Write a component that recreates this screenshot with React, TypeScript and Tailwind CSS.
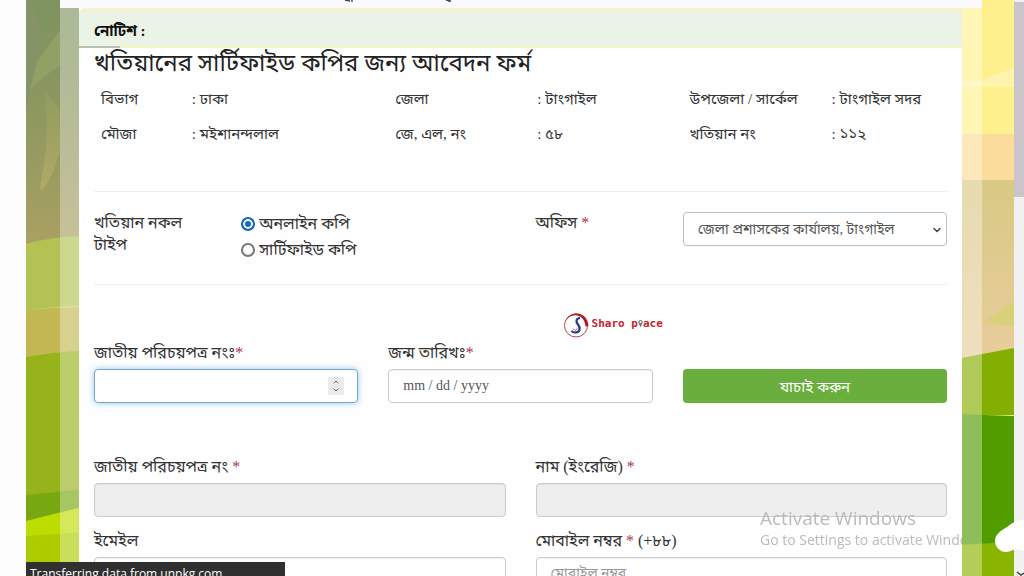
import React from "react";
import { ChevronDown, ChevronUp } from "lucide-react";

const details = [
  [
    { label: "বিভাগ", value: "ঢাকা" },
    { label: "জেলা", value: "টাংগাইল" },
    { label: "উপজেলা / সার্কেল", value: "টাংগাইল সদর" },
  ],
  [
    { label: "মৌজা", value: "মইশানন্দলাল" },
    { label: "জে, এল, নং", value: "৫৮" },
    { label: "খতিয়ান নং", value: "১১২" },
  ],
];

const baseField =
  "block h-[34px] w-full rounded border px-[14px] text-[14px] text-[#555] outline-none";
const fieldClass = `${baseField} border-[#ccc] bg-white shadow-[inset_0_1px_1px_rgba(0,0,0,0.06)]`;
const disabledClass = `${baseField} border-[#ccc] bg-[#eee] shadow-[inset_0_1px_1px_rgba(0,0,0,0.06)]`;
const focusedClass = `${baseField} border-[#79a6c8] bg-white shadow-[0_0_6px_rgba(102,175,233,0.7)]`;
const selectClass = `${baseField} appearance-none border-[#afc3d0] bg-white`;

export default function App() {
  return (
    <div className="flex h-screen overflow-hidden bg-[#fdfdfd] pl-[26px] font-['Liberation_Serif','Noto_Sans_Bengali','Noto_Sans',serif] text-[#333]">
      <div className="relative min-w-0 flex-1 overflow-hidden">
        <Landscape />

        <div className="relative mr-8 ml-[34px] min-h-full bg-white/35">
          <TopStrip />
          <main className="mr-5 ml-[19px] bg-[#fefefe]">
            <NoticeBar />
            <div className="px-[15px]">
              <h1 className="pt-[2px] text-[24px] leading-[26px] text-[#222]">
                খতিয়ানের সার্টিফাইড কপির জন্য আবেদন ফর্ম
              </h1>
              <DetailsTable />
              <hr className="mt-[39px] border-[#efefef]" />
              <CopyTypeRow />
              <hr className="border-[#efefef]" />
              <Brand />
              <VerifyRow />
              <ApplicantFields />
            </div>
          </main>
          <Watermark />
        </div>

        <div className="absolute bottom-0 left-0 h-[14px] w-[259px] overflow-hidden bg-[#303030] pl-1 font-['Open_Sans',sans-serif] text-[12px] leading-6 text-white">
          Transferring data from unpkg.com...
        </div>
      </div>

      <Scrollbar />
    </div>
  );
}

const TopStrip = () => (
  <div className="h-2 bg-[#fbfbfd]">
    {/* tails of the menu text that is scrolled out of view */}
    <svg className="ml-[284px] block" width="112" height="3" viewBox="0 0 112 3">
      <path d="M1 0l5 1M8 0v2M102 0l5 1M105 0v2" stroke="#444" strokeWidth="1.4" fill="none" />
    </svg>
  </div>
);

const NoticeBar = () => (
  <div className="rounded-tl-md border-t-[3px] border-[#f5f3c8] bg-[#eaf3e6]">
    <p className="px-[15px] pt-[10px] pb-[5px] text-[15px] leading-5 font-bold text-[#111]">
      নোটিশ :
    </p>
    <div className="flex h-[2px]">
      <span className="w-[41px] bg-[#b9c0b4]" />
      <span className="flex-1 bg-[#f4f7bf]" />
    </div>
  </div>
);

const DetailsTable = () => (
  <table className="mt-[6px] w-full table-fixed text-left text-[15px]">
    <colgroup>
      <col className="w-[11%]" />
      <col className="w-[23.5%]" />
      <col className="w-[17%]" />
      <col className="w-[17.5%]" />
      <col className="w-[17%]" />
      <col className="w-[14%]" />
    </colgroup>
    <tbody>
      {details.map((row, i) => (
        <tr key={i} className="h-[35px]">
          {row.map(({ label, value }) => (
            <React.Fragment key={label}>
              <th scope="row" className="pl-[7px] font-normal whitespace-nowrap">
                {label}
              </th>
              <td className="pl-1 whitespace-nowrap">: {value}</td>
            </React.Fragment>
          ))}
        </tr>
      ))}
    </tbody>
  </table>
);

const CopyTypeRow = () => (
  <div className="-mx-[15px] grid grid-cols-12 pt-5 pb-5 text-[16px]">
    <p id="copy-type" className="col-span-2 px-[15px] leading-[22px]">
      খতিয়ান নকল টাইপ
    </p>
    <div role="radiogroup" aria-labelledby="copy-type" className="col-span-4 px-[15px]">
      <label className="flex h-6 items-center gap-1 whitespace-nowrap">
        <Radio defaultChecked />
        অনলাইন কপি
      </label>
      <label className="flex h-7 items-center gap-1 whitespace-nowrap">
        <Radio />
        সার্টিফাইড কপি
      </label>
    </div>
    <label htmlFor="office" className="col-span-2 px-[15px] leading-[22px]">
      অফিস <Star />
    </label>
    <div className="relative col-span-4 px-[15px]">
      <select id="office" className={selectClass}>
        <option>জেলা প্রশাসকের কার্যালয়, টাংগাইল</option>
      </select>
      <ChevronDown
        size={12}
        strokeWidth={3}
        className="pointer-events-none absolute top-3 right-[19px] text-[#444]"
      />
    </div>
  </div>
);

const Radio = ({ defaultChecked }: { defaultChecked?: boolean }) => (
  <input
    type="radio"
    name="copyType"
    defaultChecked={defaultChecked}
    className="size-[14px] shrink-0 appearance-none rounded-full border-2 border-[#777] bg-white checked:border-[#1668b8] checked:bg-[#1668b8] checked:shadow-[inset_0_0_0_2px_#fff]"
  />
);

const Star = () => <span className="text-[#b3324a]">*</span>;

const Brand = () => (
  <div className="-mr-[15px] flex h-[58px] items-start pt-[27px] pl-[54%]">
    <div className="ml-2 flex items-center gap-[2px]">
      <svg width="27" height="27" viewBox="0 0 27 27" fill="none">
        <circle cx="13" cy="13.500" r="11.500" stroke="#b8494c" strokeWidth="1" />
        <path
          d="M2.500 9C5 3 10 1 15 1.500C21 2.500 25 7 25.500 14L22.500 14.500C22 8 19 4.500 14 3.500C9 2.500 5 5 2.500 9Z"
          fill="#ae1b22"
        />
        <path
          d="M17 6C13 6.500 12.500 9.500 15 12.500C18 16 17 20.500 12 20.500C10.500 20.500 9.500 20 8.500 19"
          stroke="#27348b"
          strokeWidth="2.200"
        />
        <path d="M10 16.500L12 18.500L14.500 16.500" stroke="#c5565b" strokeWidth="1" />
      </svg>
      <span className="pb-1 font-['DejaVu_Sans_Mono',monospace] text-[11px] leading-4 font-bold text-[#c5242b]">
        Sharo p
        <svg className="inline-block align-[-1px]" width="5" height="9" viewBox="0 0 5 9">
          <path d="M2.500 8.500L.5 4A2.200 2.200 0 1 1 4.500 4Z" fill="#777" />
          <circle cx="2.500" cy="3" r="1" fill="#fff" />
        </svg>
        ace
      </span>
    </div>
  </div>
);

const VerifyRow = () => (
  <form
    className="grid grid-cols-3 items-end gap-[30px]"
    onSubmit={(e) => e.preventDefault()}
  >
    <div>
      <label htmlFor="nid" className="block h-[26px] text-[16px] leading-[20px]">
        জাতীয় পরিচয়পত্র নংঃ<Star />
      </label>
      <div className="relative">
        <input id="nid" type="text" inputMode="numeric" className={focusedClass} />
        <span className="absolute top-2 right-[14px] flex h-[18px] w-4 flex-col items-center justify-center bg-[#ebebeb] text-[#666]">
          <ChevronUp size={8} strokeWidth={3} />
          <ChevronDown size={8} strokeWidth={3} />
        </span>
      </div>
    </div>
    <div>
      <label htmlFor="dob" className="block h-[26px] text-[16px] leading-[20px]">
        জন্ম তারিখঃ<Star />
      </label>
      <input
        id="dob"
        type="text"
        placeholder="mm / dd / yyyy"
        className={`${fieldClass} placeholder:text-[#555]`}
      />
    </div>
    <button
      type="submit"
      className="h-[34px] rounded bg-[#6aae3e] pt-[2px] text-[15px] text-white"
    >
      যাচাই করুন
    </button>
  </form>
);

const ApplicantFields = () => (
  <div className="mt-[54px] grid grid-cols-2 gap-x-[30px] gap-y-[14px] text-[16px]">
    <div>
      <label htmlFor="nid-result" className="block h-[26px] leading-[20px]">
        জাতীয় পরিচয়পত্র নং <Star />
      </label>
      <input id="nid-result" disabled className={disabledClass} />
    </div>
    <div>
      <label htmlFor="name-en" className="block h-[26px] leading-[20px]">
        নাম (ইংরেজি) <Star />
      </label>
      <input id="name-en" disabled className={disabledClass} />
    </div>
    <div>
      <label htmlFor="email" className="block h-[26px] leading-[20px]">
        ইমেইল
      </label>
      <input id="email" type="email" className={fieldClass} />
    </div>
    <div>
      <label htmlFor="mobile" className="block h-[26px] leading-[20px]">
        মোবাইল নম্বর <Star /> (+৮৮)
      </label>
      <input
        id="mobile"
        type="tel"
        placeholder="মোবাইল নম্বর"
        className={`${fieldClass} placeholder:text-[#999]`}
      />
    </div>
  </div>
);

const Watermark = () => (
  <div className="pointer-events-none fixed right-[62px] bottom-[26px] w-[202px] overflow-hidden font-['Open_Sans',sans-serif] whitespace-nowrap text-[#bbb]">
    <p className="text-[19px] leading-6">Activate Windows</p>
    <p className="text-[14px] leading-5">Go to Settings to activate Windows.</p>
  </div>
);

const Scrollbar = () => (
  <div className="relative w-[10px] bg-[#f1f1f1] pt-[2px]">
    <div className="h-[195px] bg-[#c9c5cb]" />
    <svg
      className="absolute right-0 bottom-[20px]"
      width="31"
      height="36"
      viewBox="0 0 31 36"
    >
      <path
        d="M31 0C23 0 19 3 14 7C7 11 2 15 2 21C2 27 7 32 13 32C18 32 20 29 24 29L31 31Z"
        fill="#fefefe"
      />
    </svg>
    <svg className="absolute right-0 bottom-0" width="8" height="5" viewBox="0 0 8 5">
      <path d="M1 1L5 4L8 2" stroke="#444" strokeWidth="1.500" fill="none" />
    </svg>
  </div>
);

const Landscape = () => (
  <svg
    className="absolute inset-0 size-full"
    viewBox="0 0 988 576"
    preserveAspectRatio="none"
  >
    <defs>
      <linearGradient id="olive" x1="0" y1="0" x2="0" y2="244" gradientUnits="userSpaceOnUse">
        <stop offset="0" stopColor="#7e9460" />
        <stop offset="0.4" stopColor="#8b9760" />
        <stop offset="1" stopColor="#aaa062" />
      </linearGradient>
      <linearGradient id="leaf" x1="0" y1="0" x2="0" y2="1">
        <stop offset="0" stopColor="#8f9c5f" />
        <stop offset="1" stopColor="#b3a964" />
      </linearGradient>
      <linearGradient id="sand" x1="0" y1="0" x2="0" y2="1">
        <stop offset="0" stopColor="#d8c984" />
        <stop offset="1" stopColor="#e9cd9d" />
      </linearGradient>
    </defs>

    {/* left side */}
    <rect width="494" height="576" fill="url(#olive)" />
    <path d="M0 0H6L14 40L10 62L4 88L0 110Z" fill="#86936a" />
    <path d="M4 91L11 62L34 30V66Q16 76 4 91Z" fill="#91a065" />
    <path d="M18 92Q28 98 34 112V150Q26 180 15 191Q13 186 17 170Q24 130 18 92Z" fill="url(#leaf)" />
    <path d="M0 244Q28 236 60 236V360H0Z" fill="#b2c353" />
    <path d="M0 311L60 306V358H0Z" fill="#c3b754" />
    <path d="M4 309L60 305V307Z" fill="#d6cf73" />
    <path d="M0 357Q30 352 60 350V500H0Z" fill="#97b31c" />
    <path d="M0 495L60 489V525H0Z" fill="#77a812" />
    <path d="M0 521L60 506V576H0Z" fill="#bddc00" />
    <path d="M0 536L60 532V576H0Z" fill="#accc00" />

    {/* right side */}
    <rect x="494" width="494" height="576" fill="#fff08e" />
    <path d="M936 82L956 80L988 68V87L936 86Z" fill="#fff3ae" />
    <rect x="930" y="134" width="58" height="48" fill="#fcdc9c" />
    <rect x="930" y="180" width="58" height="190" fill="url(#sand)" />
    <path d="M958 322L988 300V327Z" fill="#d9d07a" />
    <path d="M930 359L988 348V415H930Z" fill="#84ae00" />
    <path d="M930 414L988 416V576H930Z" fill="#529c00" />
    <path d="M930 545L988 542V576H930Z" fill="#8ab400" />
  </svg>
);
